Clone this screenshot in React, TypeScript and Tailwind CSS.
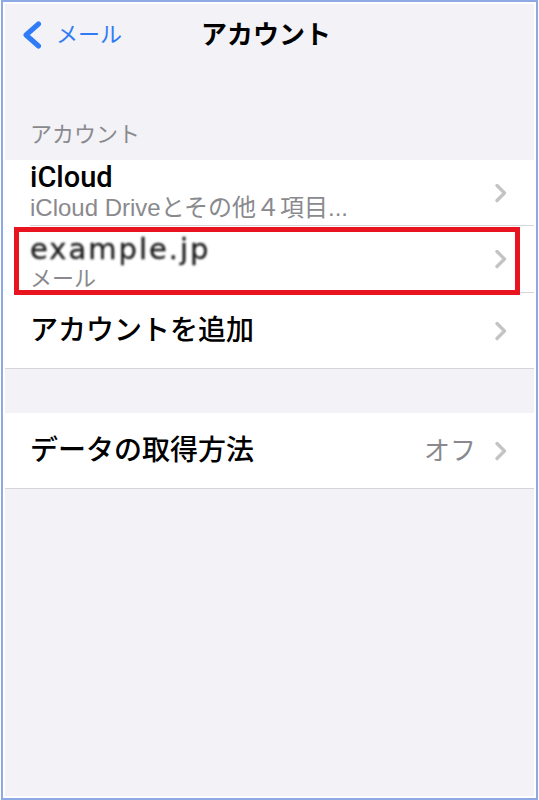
const jp = {
  fontFamily:
    '"Liberation Sans", "Noto Sans CJK JP", sans-serif',
};

const roboto = {
  fontFamily: 'Roboto, "Noto Sans CJK JP", sans-serif',
};

const dejavu = {
  fontFamily: '"DejaVu Sans", sans-serif',
};

const Chevron = () => (
  <svg width="14" height="20" viewBox="0 0 14 20" className="shrink-0">
    <path
      d="M3 2.5 L10.5 10 L3 17.5"
      fill="none"
      stroke="#c4c4c7"
      strokeWidth="3.4"
      strokeLinecap="round"
      strokeLinejoin="round"
    />
  </svg>
);

const BackChevron = () => (
  <svg width="22" height="28" viewBox="0 0 22 28">
    <path
      d="M17.5 3 L5 14 L17.5 25"
      fill="none"
      stroke="#2f7cf6"
      strokeWidth="5"
      strokeLinecap="round"
      strokeLinejoin="round"
    />
  </svg>
);

export default function App() {
  return (
    <div className="w-[539px] h-[800px] bg-white" style={jp}>
      <div className="ml-[1px] w-[537px] h-[800px] border-2 border-[#8eaae4] p-[2px]">
        <div className="relative h-full bg-[#f2f2f7]">
          {/* nav bar */}
          <div className="relative h-[62px] flex items-center">
            <div className="flex items-center pl-[16px] gap-[13px]">
              <BackChevron />
              <span className="text-[22px] text-[#2f7cf6] leading-none">メール</span>
            </div>
            <div className="absolute inset-0 flex items-center justify-center pr-[7px]">
              <span className="text-[26px] font-bold text-black leading-none">アカウント</span>
            </div>
          </div>

          {/* section header */}
          <div className="h-[94px] flex items-end pb-[14px] pl-[25px]">
            <span className="text-[22px] text-[#8a8a8e] leading-none">アカウント</span>
          </div>

          {/* accounts group */}
          <div className="bg-white border-b border-[#d6d6da]">
            <div className="ml-[25px] h-[66px] flex items-center border-b border-[#d6d6da] pr-[26px]">
              <div className="flex-1 flex flex-col self-start pt-[2px]">
                <span className="text-[29px] font-medium text-black leading-[31px]" style={roboto}>
                  iCloud
                </span>
                <span className="text-[24px] text-[#8a8a8e] leading-[30px]">
                  iCloud Driveとその他４項目...
                </span>
              </div>
              <Chevron />
            </div>
            <div className="ml-[25px] h-[67px] flex items-center border-b border-[#d6d6da] pr-[26px]">
              <div className="flex-1 flex flex-col self-start pt-[6px]">
                <span
                  className="text-[29px] text-[#1a1a1a] leading-[34px] tracking-[2px] blur-[0.8px] [-webkit-text-stroke:0.3px_#1a1a1a]"
                  style={dejavu}
                >
                  example.jp
                </span>
                <span className="text-[22px] text-[#8a8a8e] leading-[25px]">メール</span>
              </div>
              <Chevron />
            </div>
            <div className="ml-[25px] h-[75px] flex items-center pr-[26px]">
              <span className="flex-1 text-[28px] font-medium text-black leading-none">
                アカウントを追加
              </span>
              <Chevron />
            </div>
          </div>

          <div className="h-[44px]" />

          {/* fetch group */}
          <div className="bg-white border-b border-[#d6d6da]">
            <div className="ml-[25px] h-[75px] flex items-center pr-[26px]">
              <span className="flex-1 text-[28px] font-medium text-black leading-none">
                データの取得方法
              </span>
              <span className="text-[26px] text-[#8a8a8e] leading-none mr-[18px]">オフ</span>
              <Chevron />
            </div>
          </div>

          {/* annotation box */}
          <div className="absolute left-[9px] top-[223px] w-[506px] h-[68px] border-[5px] border-[#e8141f]" />
        </div>
      </div>
    </div>
  );
}
